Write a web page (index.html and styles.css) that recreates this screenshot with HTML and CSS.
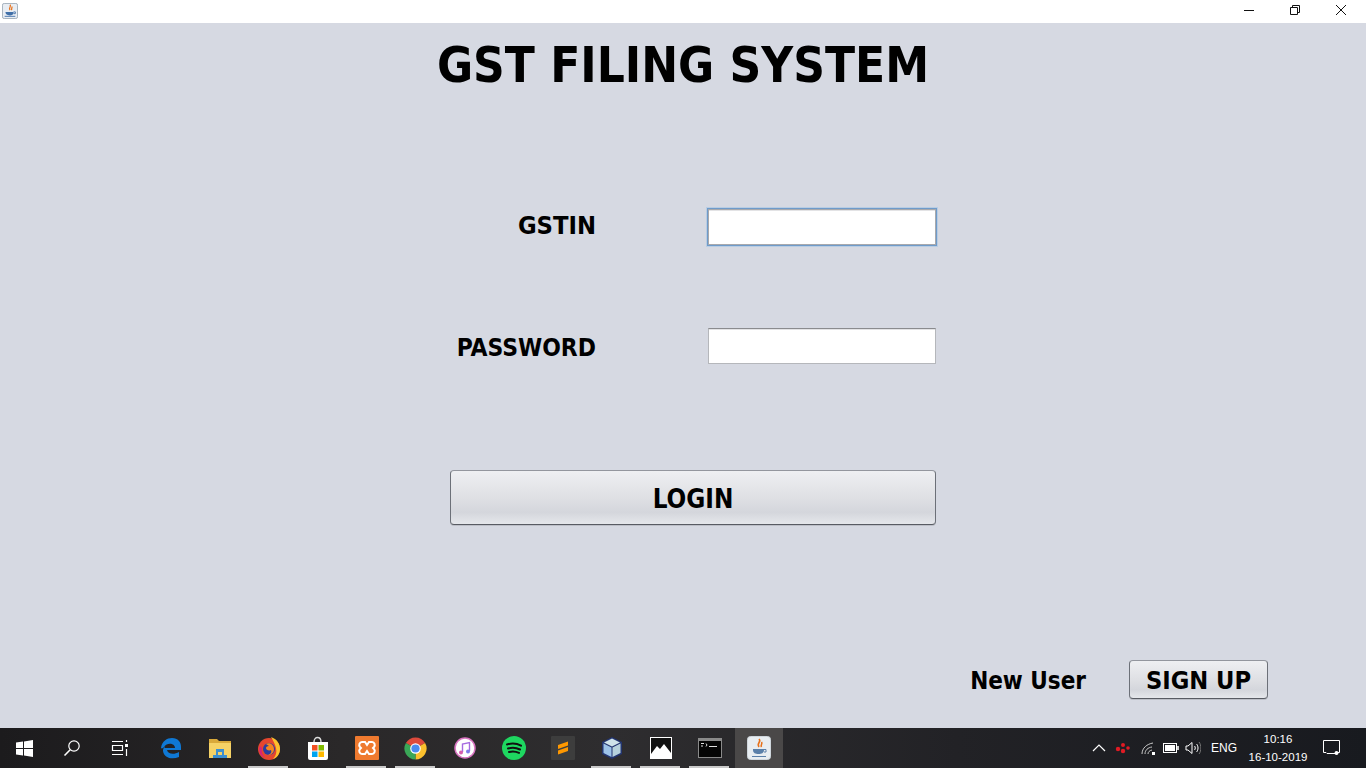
FILE: index.html
```html
<!DOCTYPE html>
<html lang="en">
<head>
<meta charset="utf-8">
<title>GST Filing System</title>
<link rel="stylesheet" href="styles.css">
</head>
<body>
<div class="window">
  <header class="titlebar">
    <svg class="app-icon" width="16" height="16" viewBox="0 0 18 18"><rect x=".5" y=".5" width="17" height="17" rx="2" fill="#e8edf3" stroke="#9aa7b5"/><path d="M9 2c2 2-2 3 0 6M11 4c1 2-1 2 0 4" stroke="#e8711a" stroke-width="1.4" fill="none"/><path d="M4 10h9v1c0 2-2 3-4 3s-5-1-5-3z" fill="#3f6fa8"/><path d="M13 10h2v2h-2M3 15h12" stroke="#3f6fa8" fill="none"/></svg>
    <div class="win-controls">
      <svg width="12" height="12" viewBox="0 0 12 12"><path d="M1 6.500h10" stroke="#111"/></svg>
      <svg width="12" height="12" viewBox="0 0 12 12"><path d="M1.500 3.500h7v7h-7zM3.500 3.500v-2h7v7h-2" stroke="#111" fill="none"/></svg>
      <svg width="12" height="12" viewBox="0 0 12 12"><path d="M1 1l10 10M11 1L1 11" stroke="#111"/></svg>
    </div>
  </header>

  <main class="content">
    <h1 class="title">GST FILING SYSTEM</h1>
    <form class="form">
      <div class="row row-gstin">
        <label class="label label-gstin">GSTIN</label>
        <div class="field field-focus"></div>
      </div>
      <div class="row row-password">
        <label class="label label-password">PASSWORD</label>
        <div class="field"></div>
      </div>
      <button type="button" class="btn btn-login">LOGIN</button>
    </form>
    <div class="signup">
      <span class="new-user">New User</span>
      <button type="button" class="btn btn-signup">SIGN UP</button>
    </div>
  </main>

  <footer class="taskbar">
    <div class="tb-left">
      <div class="slot"><svg width="17" height="17" viewBox="0 0 17 17"><path d="M0 2.500L7 1.500V8H0zM8 1.400L17 0V8H8zM0 9h7v6.500L0 14.500zM8 9h9v8L8 15.600z" fill="#fff"/></svg></div>
      <div class="slot"><svg width="18" height="18" viewBox="0 0 18 18"><circle cx="11" cy="7" r="5.200" fill="none" stroke="#fff" stroke-width="1.200"/><path d="M7.200 10.800L1.500 16.500" stroke="#fff" stroke-width="1.600"/></svg></div>
      <div class="slot"><svg width="18" height="16" viewBox="0 0 18 16"><path d="M1 1.500h11M1 14.500h11M1.500 5.500h10v5h-10z" fill="none" stroke="#fff" stroke-width="1.200"/><rect x="14" y="4" width="3" height="3" fill="#fff"/><path d="M15.500 0v2M15.500 9v7" stroke="#fff" stroke-width="1.200"/></svg></div>
      <div class="slot slot-edge"><svg width="22" height="22" viewBox="0 0 22 22"><path d="M1 11C2 4 7 1 12 1c6 0 9 4 9 9v3H7c.5 4 7 5 12 2v5c-7 3-15 1-16-6-.2-2 1-4 3-6-1 1-1.500 2-1.500 3H15c0-5-8-6-11-1-1 1-2 2-3 1z" fill="#0f78d4"/></svg></div>
      <div class="slot"><svg width="22" height="20" viewBox="0 0 22 20"><path d="M0 1h8l2 2h12v3H0z" fill="#d9a93a"/><path d="M0 5h22v15H0z" fill="#f5d266"/><path d="M7 11h8v6h-2v-3H9v3H7z" fill="#3b8fd0"/><rect x="4" y="17" width="14" height="3" fill="#3b8fd0"/></svg></div>
      <div class="slot running"><svg width="24" height="24" viewBox="0 0 24 24"><circle cx="12" cy="13" r="11" fill="#e5462f"/><path d="M14 1c6 2 9 7 9 12 0 5-3 9-7 10 3-3 4-7 3-11-1-4-3-8-5-11z" fill="#fbc02d"/><circle cx="12" cy="13" r="6" fill="#2a3f9e"/><path d="M9 8c4-2 8 1 8 5s-3 6-6 6c3-1 4-3 3-5-2 1-5 0-5-2 0-1 1-2 3-2z" fill="#f6851f"/><path d="M3 10c-2 4 0 10 5 12-3-3-4-7-3-10z" fill="#d6217b"/></svg></div>
      <div class="slot"><svg width="24" height="24" viewBox="0 0 24 24"><path d="M8 6c0-6 7-6 7 0" fill="none" stroke="#ddd" stroke-width="1.400"/><path d="M2 6h20v16a2 2 0 0 1-2 2H4a2 2 0 0 1-2-2z" fill="#fff"/><rect x="6" y="9" width="5.500" height="5.500" fill="#f25022"/><rect x="12.500" y="9" width="5.500" height="5.500" fill="#7fba00"/><rect x="6" y="15.500" width="5.500" height="5.500" fill="#00a4ef"/><rect x="12.500" y="15.500" width="5.500" height="5.500" fill="#ffb900"/></svg></div>
      <div class="slot running"><svg width="24" height="24" viewBox="0 0 24 24"><rect width="24" height="24" rx="1" fill="#ef7a2f"/><path d="M7 6h3l2 3 2-3h3a3 3 0 0 1 2 5l-1 1 1 1a3 3 0 0 1-2 5h-3l-2-3-2 3H7a3 3 0 0 1-2-5l1-1-1-1a3 3 0 0 1 2-5z" fill="none" stroke="#fff" stroke-width="2"/></svg></div>
      <div class="slot running"><svg width="23" height="23" viewBox="0 0 24 24"><path d="M12 12L2 6.250A11.500 11.500 0 0 1 22 6.250z" fill="#de4a3c"/><path d="M12 12L22 6.250A11.500 11.500 0 0 1 12 23.500z" fill="#fbc02d"/><path d="M12 12L12 23.500A11.500 11.500 0 0 1 2 6.250z" fill="#3aa757"/><circle cx="12" cy="12" r="5.500" fill="#fff"/><circle cx="12" cy="12" r="4.300" fill="#4b8bf0"/></svg></div>
      <div class="slot"><svg width="22" height="22" viewBox="0 0 22 22"><circle cx="11" cy="11" r="10" fill="#fff" stroke="#d873c0" stroke-width="1.500"/><path d="M8.500 15V7l7-1.500V14" fill="none" stroke="#a56be0" stroke-width="1.400"/><circle cx="7" cy="15.500" r="2" fill="#d85cae"/><circle cx="14" cy="14.500" r="2" fill="#7f7bea"/></svg></div>
      <div class="slot"><svg width="24" height="24" viewBox="0 0 24 24"><circle cx="12" cy="12" r="12" fill="#1ed760"/><path d="M5 8.500c5-1.500 10-1 14 1.200M6 12.500c4-1.200 8.500-.8 12 1M7 16c3.500-1 7-.6 10 .9" fill="none" stroke="#111" stroke-width="2" stroke-linecap="round"/></svg></div>
      <div class="slot"><svg width="24" height="24" viewBox="0 0 24 24"><rect width="24" height="24" rx="1" fill="#3d3d3d"/><path d="M17 5.500L7 9v4l10-3.500zM7 18.500l10-3.500v-4L7 14.500z" fill="#ff9800"/></svg></div>
      <div class="slot running"><svg width="22" height="24" viewBox="0 0 22 24"><path d="M11 1l10 5v12l-10 5-10-5V6z" fill="#23356f"/><path d="M11 2.500l8 4-8 4-8-4z" fill="#cfe3ea"/><path d="M2.500 7.500l8 4V21l-8-4z" fill="#9cc2e8"/><path d="M19.500 7.500l-8 4V21l8-4z" fill="#b7d2dc"/></svg></div>
      <div class="slot running"><svg width="22" height="22" viewBox="0 0 22 22"><rect width="22" height="22" fill="#fff"/><rect x="1" y="1" width="20" height="20" fill="#111"/><path d="M1 21v-4l6-8 3 3 4-5 7 9v5z" fill="#fff"/></svg></div>
      <div class="slot running"><svg width="24" height="20" viewBox="0 0 24 20"><rect width="24" height="20" fill="#8a8a8a"/><rect x="1" y="3" width="22" height="16" fill="#050505"/><path d="M3 5.500h3M3 8h2M8 5.500l1 1.500-1 1.500M11 8.500h8" stroke="#ddd" fill="none"/></svg></div>
      <div class="slot active"><svg width="24" height="24" viewBox="0 0 24 24"><rect x=".5" y=".5" width="23" height="23" rx="3" fill="#e8edf1" stroke="#cfd6dc"/><path d="M12 3c3 3-3 4 0 8M14.500 6c1.500 2-1.500 3 0 5" stroke="#e8711a" stroke-width="1.600" fill="none"/><path d="M6 13h11v1c0 3-2.500 4-5.500 4S6 17 6 14z" fill="#5a7fa8"/><path d="M17 13.500h2v2.500h-2M5 20.500h14" stroke="#5a7fa8" fill="none"/></svg></div>
    </div>
    <div class="tray">
      <svg class="t-caret" width="14" height="8" viewBox="0 0 14 8"><path d="M1 7l6-6 6 6" fill="none" stroke="#fff" stroke-width="1.200"/></svg>
      <svg class="t-cluster" width="15" height="12" viewBox="0 0 15 12"><g fill="#e01b24"><circle cx="3" cy="7" r="2.200"/><circle cx="8" cy="3" r="2"/><circle cx="8" cy="9" r="2.200"/><circle cx="13" cy="6" r="1.800"/></g></svg>
      <svg class="t-wifi" width="15" height="13" viewBox="0 0 15 13"><path d="M1 12C1 6 6 2 12 1M4 12c0-4 3-6.500 7-7M7 12c0-2 1.500-3.500 4-4" fill="none" stroke="#c9c9c9"/><rect x="11" y="10" width="3" height="3" fill="#fff"/></svg>
      <svg class="t-batt" width="16" height="10" viewBox="0 0 16 10"><rect x=".5" y=".5" width="13" height="9" fill="none" stroke="#fff"/><rect x="2" y="2" width="10" height="6" fill="#fff"/><rect x="14" y="3" width="2" height="4" fill="#ccc"/></svg>
      <svg class="t-vol" width="16" height="14" viewBox="0 0 16 14"><path d="M1 5h2l4-3.500v11L3 9H1z" fill="none" stroke="#fff"/><path d="M9.500 5c1 1 1 3 0 4M11.500 3c2 2 2 6 0 8" fill="none" stroke="#fff"/><path d="M14 1c2.500 3 2.500 9 0 12" fill="none" stroke="#777"/></svg>
      <span class="t-lang">ENG</span>
      <div class="t-clock"><span>10:16</span><span>16-10-2019</span></div>
      <svg class="t-notif" width="18" height="16" viewBox="0 0 18 16"><path d="M.5.500h16v12h-3l-1 1H4l-1-1H.5z" fill="none" stroke="#fff"/><circle cx="13.500" cy="13" r="2" fill="#fff"/></svg>
    </div>
  </footer>
</div>
</body>
</html>
```
FILE: styles.css
```css
* { box-sizing: border-box; }
html, body { margin: 0; height: 100%; }
body { overflow: hidden; font-family: "DejaVu Sans", sans-serif; }

.window { display: flex; flex-direction: column; width: 1366px; height: 768px; }

.titlebar {
  height: 23px;
  background: #fff;
  display: flex;
  align-items: center;
  justify-content: space-between;
  padding: 0 19px 0 2px;
}
.app-icon { display: block; margin-top: -1px; }
.win-controls { display: flex; gap: 34px; margin-top: -3px; }

.content {
  flex: 1;
  background: #d6d9e2;
  color: #000;
  font-weight: 700;
  font-stretch: condensed;
  font-family: "DejaVu Sans Condensed", "DejaVu Sans", sans-serif;
}
.title {
  margin: 0;
  padding-top: 14px;
  height: 186px;
  font-size: 49px;
  line-height: 58px;
  text-align: center;
  font-weight: 700;
}
.form { width: 486px; margin-left: 450px; height: 451px; }
.row { display: grid; grid-template-columns: 146px 228px; grid-template-rows: 36px; column-gap: 112px; height: 36px; }
.row-password { margin-top: 83px; }
.label { text-align: right; align-self: start; }
.label-gstin { font-size: 25.300px; line-height: 34px; }
.label-password { font-size: 24.400px; line-height: 40px; }
.field {
  height: 36px;
  background: #fff;
  border: 1px solid #b5b7bb;
  border-top: 1px solid #8a8b8e;
  box-shadow: inset 0 1px 0 #e3e3e5;
}
.field-focus {
  border: 1px solid #a8a9ad;
  box-shadow: 0 0 0 1px #6f9bca, 0 0 0 2px #b9cde3, inset 0 1px 0 #e3e3e5;
}
.btn {
  display: block;
  font: inherit;
  color: #000;
  border: 1px solid #6c7078;
  border-top-color: #93969e;
  border-bottom-color: #585b63;
  border-radius: 4px;
  background: linear-gradient(#eeeff2 0%, #dfe0e4 50%, #d4d6dc 78%, #e5e7eb 100%);
  box-shadow: 0 1px 0 #bcbfc7;
  padding: 0;
}
.btn-login { width: 486px; height: 55px; margin-top: 106px; font-size: 25.800px; padding-top: 3px; }
.signup { display: flex; align-items: center; justify-content: flex-end; padding-right: 98px; }
.new-user { font-size: 24px; margin-right: 43px; padding-top: 2px; }
.btn-signup { width: 139px; height: 39px; font-size: 25.200px; padding-top: 1px; }

.taskbar {
  height: 40px;
  background: linear-gradient(90deg, #1c1b1d 0%, #2a2829 25%, #2e2d2f 45%, #222226 70%, #181a1f 100%);
  display: flex;
  justify-content: space-between;
  color: #fff;
}
.tb-left { display: flex; }
.slot { width: 49px; height: 40px; display: flex; align-items: center; justify-content: center; position: relative; }
.slot:first-child { width: 48px; }
.slot:nth-child(2) { width: 48px; }
.slot:nth-child(3) { width: 48px; }
.slot-edge { margin-left: 2px; }
.running::after {
  content: "";
  position: absolute;
  left: 4px;
  right: 5px;
  bottom: 0;
  height: 2px;
  background: #c9c9c9;
}
.active { background: #4a4848; width: 48px; margin-left: 1px; }
.tray { display: flex; align-items: center; font-family: "Liberation Sans", sans-serif; font-size: 11.500px; color: #fff; padding-right: 25px; white-space: nowrap; }
.t-caret { margin-right: 9px; }
.t-cluster { margin-right: 11px; }
.t-wifi { margin-right: 7px; }
.t-batt { margin-right: 6px; }
.t-vol { margin-right: 10px; }
.t-lang { margin-right: 12px; font-size: 12px; }
.t-clock { display: flex; flex-direction: column; align-items: center; line-height: 18px; margin-right: 16px; width: 58px; }
.t-notif { display: block; }
```
